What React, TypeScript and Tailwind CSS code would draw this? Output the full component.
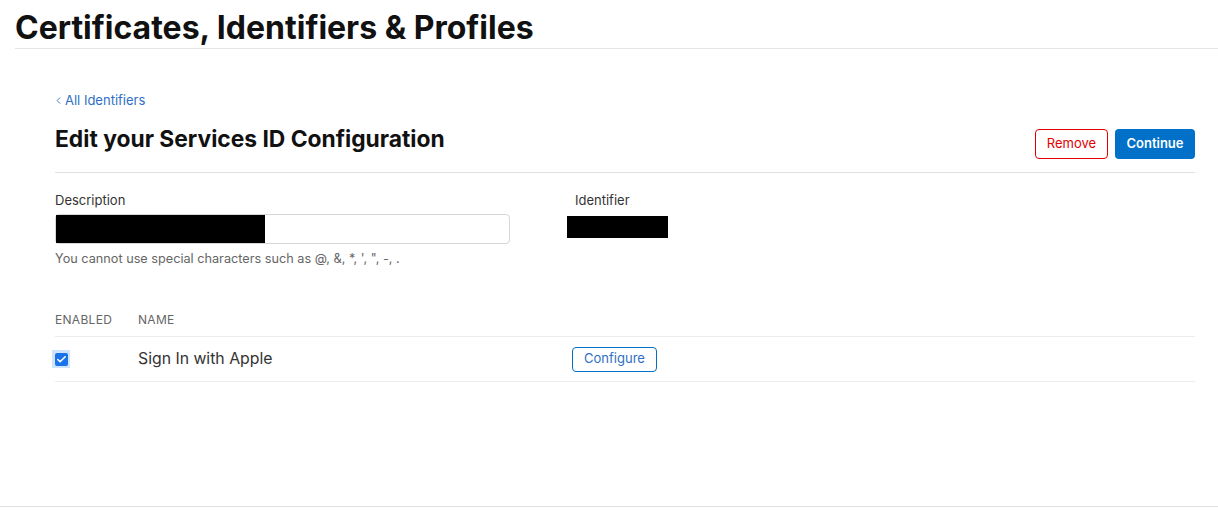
import { Check, ChevronLeft } from 'lucide-react';

export default function App() {
  return (
    <div className="min-h-[526px] bg-white text-[#333] font-['Inter',sans-serif]">
      {/* Page header */}
      <div className="border-b border-[#e5e5e5] ml-[15px] h-[49px]">
        <h1 className="pt-[9px] text-[32px] leading-[38px] font-bold text-[#111]">
          Certificates, Identifiers &amp; Profiles
        </h1>
      </div>

      <div className="pl-[55px] pr-[23px] pt-[43px] h-[457px]">
        {/* Back link */}
        <a className="flex w-fit items-center gap-0 text-[13px] leading-[16px] text-[#2f6fc4]">
          <ChevronLeft size={11} strokeWidth={2} className="-ml-[2px] mr-[1px]" />
          All Identifiers
        </a>

        {/* Title + actions */}
        <div className="mt-[16px] flex items-start justify-between border-b border-[#e0e0e0] pb-[13px]">
          <h2 className="text-[22.8px] leading-[30px] font-bold text-[#111]">
            Edit your Services ID Configuration
          </h2>
          <div className="mt-[5px] flex gap-[7px]">
            <button className="h-[30px] w-[73px] rounded-[4px] border border-[#e30000] text-[13px] text-[#e30000] bg-white">
              Remove
            </button>
            <button className="h-[30px] w-[80px] rounded-[4px] bg-[#0070c9] text-[13px] font-semibold text-white">
              Continue
            </button>
          </div>
        </div>

        {/* Fields */}
        <div className="mt-[18px] flex">
          <div className="w-[455px]">
            <div className="text-[13px] leading-[18px] text-[#333]">Description</div>
            <div className="mt-[5px] h-[30px] rounded-[4px] border border-[#d6d6d6] bg-white flex items-center">
              <div className="h-[28px] w-[209px] bg-black" />
            </div>
            <p className="mt-[7px] text-[12.7px] leading-[16px] text-[#666]">
              You cannot use special characters such as @, &amp;, *, &#39;, &quot;, -, .
            </p>
          </div>
          <div className="ml-[57px]">
            <div className="pl-[8px] text-[13px] leading-[18px] text-[#333]">Identifier</div>
            <div className="mt-[7px] h-[22px] w-[101px] bg-black" />
          </div>
        </div>

        {/* Capabilities table */}
        <div className="mt-[45px]">
          <div className="flex border-b border-[#ececec] pb-[8px] text-[12px] leading-[16px] text-[#666] tracking-[0.3px]">
            <div className="w-[83px]">ENABLED</div>
            <div>NAME</div>
          </div>
          <div className="flex items-center h-[45px] border-b border-[#ececec]">
            <div className="w-[83px]">
              <div className="-ml-[3px] flex h-[18px] w-[18px] items-center justify-center bg-[#cfe3fb]">
                <div className="flex h-[13px] w-[13px] items-center justify-center rounded-[2px] bg-[#1a73e8]">
                  <Check size={11} strokeWidth={3.5} className="text-white" />
                </div>
              </div>
            </div>
            <div className="w-[434px] text-[15.8px] text-[#333]">Sign In with Apple</div>
            <button className="h-[25px] w-[85px] rounded-[4px] border border-[#0070c9] text-[13px] text-[#2f6fc4] bg-white">
              Configure
            </button>
          </div>
        </div>
      </div>

      {/* Footer divider */}
      <div className="h-px bg-[#e0e0e0]" />
    </div>
  );
}
